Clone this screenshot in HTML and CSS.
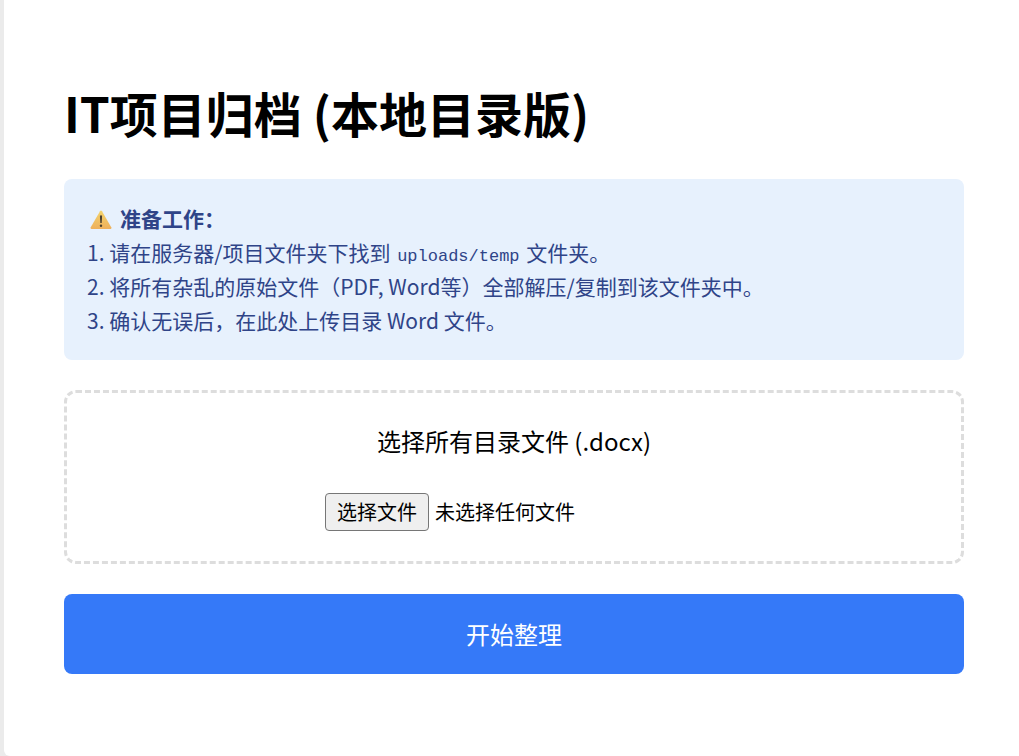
FILE: index.html
```html
<!DOCTYPE html>
<html lang="zh-CN">
<head>
<meta charset="utf-8">
<meta name="viewport" content="width=device-width, initial-scale=1">
<title>IT项目归档</title>
<link rel="stylesheet" href="styles.css">
</head>
<body>
<main class="card">
  <h1 class="title">IT项目归档 (本地目录版)</h1>
  <section class="notice">
    <p class="notice-head">
      <svg class="warn-icon" viewBox="0 0 22 20" aria-hidden="true">
        <defs>
          <linearGradient id="warn-fill" x1="0" y1="0" x2="0" y2="1">
            <stop offset="0" stop-color="#f3d36c"/>
            <stop offset="1" stop-color="#eeb05c"/>
          </linearGradient>
        </defs>
        <path d="M10 1.2Q11 0 12 1.2L21.4 17.6Q21.8 19 20.6 19H1.4Q.2 19 .6 17.6Z" fill="url(#warn-fill)"/>
        <path d="M9.9 5.8Q11 4.8 12.1 5.8L11.7 13H10.3Z" fill="#4a4030"/>
        <circle cx="11" cy="15.8" r="1.2" fill="#4a4030"/>
      </svg>
      <strong>准备工作：</strong>
    </p>
    <p>1. 请在服务器/项目文件夹下找到 <code class="path">uploads/temp</code> 文件夹。</p>
    <p>2. 将所有杂乱的原始文件（PDF, Word等）全部解压/复制到该文件夹中。</p>
    <p>3. 确认无误后，在此处上传目录 Word 文件。</p>
  </section>
  <form class="form">
    <div class="drop">
      <label class="drop-label" for="docs">选择所有目录文件 (.docx)</label>
      <div class="picker">
        <input class="picker-input" id="docs" type="file" accept=".docx" multiple>
        <span class="picker-button">选择文件</span>
        <span class="picker-status">未选择任何文件</span>
      </div>
    </div>
    <button class="submit" type="button">开始整理</button>
  </form>
</main>
</body>
</html>
```
FILE: styles.css
```css
* {
  box-sizing: border-box;
}

body {
  margin: 0;
  padding-left: 4px;
  background: #ebebeb;
  color: #000;
  font-family: "Noto Sans CJK SC", sans-serif;
}

.card {
  min-height: 100vh;
  padding: 76px 55px 80px 60px;
  background: #fff;
  border-radius: 0 0 0 6px;
}

.title {
  margin: 0 0 31px;
  font-size: 48px;
  line-height: 72px;
  font-weight: 700;
}

.notice {
  margin-bottom: 30px;
  padding: 22px 22px 23px 23px;
  border-radius: 8px;
  background: #e7f1fd;
  color: #2f4488;
  font-size: 21px;
  line-height: 34px;
}

.notice p {
  margin: 0;
}

.notice .notice-head {
  display: flex;
  align-items: center;
  gap: 8px;
  padding-left: 3px;
}

.warn-icon {
  width: 22px;
  height: 20px;
  margin-top: 4px;
}

.path {
  padding: 0 2px;
  font-family: "Liberation Mono", monospace;
  font-size: 17px;
  line-height: 1;
}

.form {
  display: flex;
  flex-direction: column;
  gap: 30px;
}

.drop {
  display: flex;
  flex-direction: column;
  align-items: center;
  gap: 34px;
  padding: 30px;
  border: 3px dashed #ddd;
  border-radius: 12px;
}

.drop-label {
  font-size: 24px;
  line-height: 36px;
}

.picker {
  position: relative;
  display: flex;
  align-items: center;
  gap: 6px;
  width: 378px;
  max-width: 100%;
  font-size: 20px;
  line-height: 30px;
}

.picker-input {
  position: absolute;
  inset: 0;
  width: 100%;
  opacity: 0;
  cursor: pointer;
}

.picker-button {
  padding: 3px 11px;
  border: 1px solid #767676;
  border-radius: 4px;
  background: #efefef;
}

.submit {
  width: 100%;
  padding: 22px;
  border: 0;
  border-radius: 8px;
  background: #3579f8;
  color: #fff;
  font-family: inherit;
  font-size: 24px;
  line-height: 36px;
  cursor: pointer;
}
```
